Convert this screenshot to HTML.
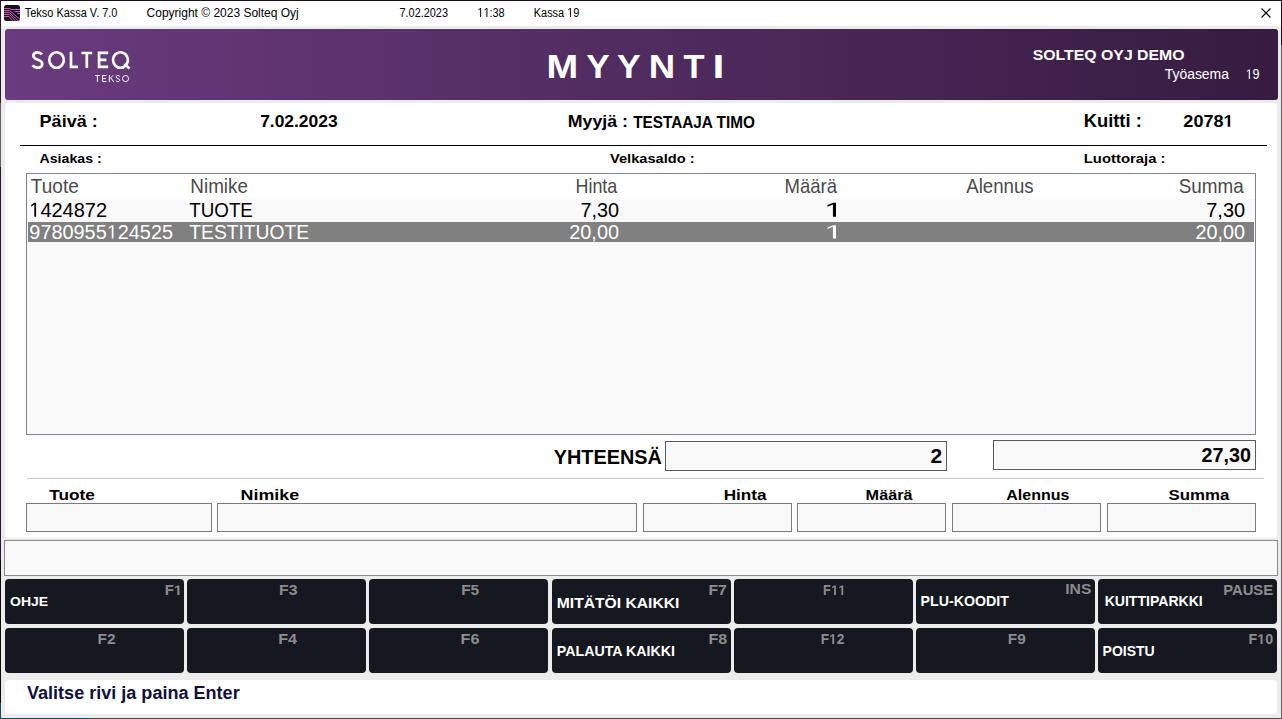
<!DOCTYPE html>
<html><head><meta charset="utf-8"><title>Tekso Kassa</title>
<style>
*{margin:0;padding:0;box-sizing:border-box}
html,body{width:1282px;height:719px;overflow:hidden;background:#ececec;font-family:"Liberation Sans",sans-serif}
.a{position:absolute}
#win{position:absolute;left:0;top:0;width:1282px;height:719px;background:#ececec}
#titlebar{left:1px;top:1px;width:1280px;height:25px;background:#fff}
#banner{left:5px;top:29px;width:1273px;height:71px;border-radius:3px;background:linear-gradient(90deg,#6a3b7e 0%,#361c40 100%)}
#panel{left:5px;top:103px;width:1272px;height:435px;border-radius:4px;background:#fff}
#msg{left:4px;top:540px;width:1274px;height:36px;border:1px solid #8a8a8a;background:#f9f9f9}
#status{left:5px;top:680px;width:1272px;height:34px;border-radius:4px;background:#fff}
.tbl{border:1px solid #7f8290;background:#f9f9f9}
.thd{background:#fff}
.row1{background:#f9f9f9}
.sel{background:#808080}
.tot{border:1px solid #5a5a5a;background:#f9f9f9}
.line{background:#000}
.sep{background:#c6c6c6}
.inp{border:1px solid #7a7a7a;background:#f9f9f9}
.btn{background:#16181f;border-radius:4px}
svg.txt{position:absolute;left:0;top:0;width:1282px;height:719px;font-family:"Liberation Sans",sans-serif}
</style></head><body>
<div id="win"></div>
<div id="titlebar" class="a"></div>
<div id="banner" class="a"></div>
<div id="panel" class="a"></div>
<div id="msg" class="a"></div>
<div id="status" class="a"></div>
<div class="a tbl" style="left:26px;top:173px;width:1230px;height:262px"></div>
<div class="a thd" style="left:28px;top:174px;width:1226px;height:25px"></div>
<div class="a row1" style="left:28px;top:199px;width:1226px;height:23px"></div>
<div class="a sel" style="left:28px;top:222px;width:1226px;height:20px"></div>
<div class="a tot" style="left:665px;top:441px;width:282px;height:30px"></div>
<div class="a tot" style="left:993px;top:440px;width:263px;height:30px"></div>
<div class="a line" style="left:20px;top:145px;width:1247px;height:1px"></div>
<div class="a sep" style="left:27px;top:478px;width:1237px;height:1px"></div>
<div class="a inp" style="left:26px;top:503px;width:186px;height:29px"></div>
<div class="a inp" style="left:217px;top:503px;width:420px;height:29px"></div>
<div class="a inp" style="left:643px;top:503px;width:149px;height:29px"></div>
<div class="a inp" style="left:797px;top:503px;width:149px;height:29px"></div>
<div class="a inp" style="left:952px;top:503px;width:149px;height:29px"></div>
<div class="a inp" style="left:1107px;top:503px;width:149px;height:29px"></div>
<div class="a btn" style="left:5px;top:579px;width:179px;height:45px"></div>
<div class="a btn" style="left:187px;top:579px;width:179px;height:45px"></div>
<div class="a btn" style="left:369px;top:579px;width:179px;height:45px"></div>
<div class="a btn" style="left:552px;top:579px;width:179px;height:45px"></div>
<div class="a btn" style="left:734px;top:579px;width:179px;height:45px"></div>
<div class="a btn" style="left:916px;top:579px;width:179px;height:45px"></div>
<div class="a btn" style="left:1098px;top:579px;width:179px;height:45px"></div>
<div class="a btn" style="left:5px;top:628px;width:179px;height:45px"></div>
<div class="a btn" style="left:187px;top:628px;width:179px;height:45px"></div>
<div class="a btn" style="left:369px;top:628px;width:179px;height:45px"></div>
<div class="a btn" style="left:552px;top:628px;width:179px;height:45px"></div>
<div class="a btn" style="left:734px;top:628px;width:179px;height:45px"></div>
<div class="a btn" style="left:916px;top:628px;width:179px;height:45px"></div>
<div class="a btn" style="left:1098px;top:628px;width:179px;height:45px"></div>
<div class="a bd" style="left:0px;top:0px;width:1282px;height:1px;background:#1c1020"></div>
<div class="a bd" style="left:0px;top:1px;width:1px;height:102px;background:#2a1630"></div>
<div class="a bd" style="left:0px;top:103px;width:1px;height:64px;background:#606060"></div>
<div class="a bd" style="left:0px;top:167px;width:1px;height:393px;background:#2a1630"></div>
<div class="a bd" style="left:0px;top:560px;width:1px;height:143px;background:#0c0c0e"></div>
<div class="a bd" style="left:0px;top:703px;width:1px;height:16px;background:#0f4c60"></div>
<div class="a bd" style="left:1281px;top:1px;width:1px;height:44px;background:#1c1020"></div>
<div class="a bd" style="left:1281px;top:45px;width:1px;height:673px;background:#626262"></div>
<div class="a bd" style="left:1px;top:718px;width:89px;height:1px;background:#0f4c60"></div>
<div class="a bd" style="left:90px;top:718px;width:1192px;height:1px;background:#4a4a4a"></div>
<svg class="txt" width="1282" height="719" viewBox="0 0 1282 719">
<text x="24.76" y="17.00" font-size="13.08" font-weight="normal" fill="#000" textLength="92.67" lengthAdjust="spacingAndGlyphs">Tekso Kassa V. 7.0</text>
<text x="146.59" y="17.00" font-size="13.08" font-weight="normal" fill="#000" textLength="152.12" lengthAdjust="spacingAndGlyphs">Copyright © 2023 Solteq Oyj</text>
<text x="399.54" y="17.00" font-size="13.08" font-weight="normal" fill="#000" textLength="48.43" lengthAdjust="spacingAndGlyphs">7.02.2023</text>
<text x="477.32" y="17.00" font-size="13.08" font-weight="normal" fill="#000" textLength="27.33" lengthAdjust="spacingAndGlyphs">  :38</text><polygon transform="translate(477.32,17.00) scale(0.00550,-0.00639)" points="696,0 515,0 515,1237 197,1010 197,1180 530,1409 696,1409" fill="#000"/><polygon transform="translate(483.58,17.00) scale(0.00550,-0.00639)" points="696,0 515,0 515,1237 197,1010 197,1180 530,1409 696,1409" fill="#000"/>
<text x="533.80" y="17.00" font-size="13.08" font-weight="normal" fill="#000" textLength="45.51" lengthAdjust="spacingAndGlyphs">Kassa  9</text><polygon transform="translate(567.18,17.00) scale(0.00533,-0.00639)" points="696,0 515,0 515,1237 197,1010 197,1180 530,1409 696,1409" fill="#000"/>
<defs><clipPath id="ic"><rect x="4" y="5" width="16" height="16" rx="2.5"/></clipPath>
<linearGradient id="ig" gradientUnits="userSpaceOnUse" x1="4" y1="0" x2="20" y2="0"><stop offset="0" stop-color="#e04aa8"/><stop offset="1" stop-color="#c85ae0"/></linearGradient></defs>
<g clip-path="url(#ic)">
<rect x="4" y="5" width="16" height="16" fill="#121317"/>
<g fill="none" stroke="url(#ig)" stroke-width="1">
<path d="M3,8.5 H9 L11,9.5 H21"/>
<path d="M3,10.5 H9.5 L22,21"/>
<path d="M3,12.5 H9.5 L19.5,22"/>
<path d="M3,14.5 H9.5 L16.5,22"/>
<path d="M3,16.5 H9 L13.5,22"/>
<path d="M14.5,11.5 H21"/>
<path d="M17,13.5 H21"/>
</g></g>
<path d="M1261.5,8.5 L1270.5,17.5 M1270.5,8.5 L1261.5,17.5" stroke="#000" stroke-width="1.1" fill="none"/>
<g fill="none" stroke="#fff" stroke-width="2.7">
<path d="M41.9,54.5 C40.9,53 39.4,52.3 37.6,52.3 C35.1,52.3 33.4,53.7 33.4,55.8 C33.4,61 42.2,58.5 42.2,63.9 C42.2,66.1 40.4,67.6 37.6,67.6 C35.4,67.6 33.6,66.7 32.6,65.2"/>
<ellipse cx="56.55" cy="60" rx="7.3" ry="7.75"/>
<path d="M71.0,51.7 V66.8 H78"/>
<path d="M81.4,53 H92.2 M86.8,53 V68"/>
<path d="M108.2,52.95 H99.05 V66.95 H108.2 M99.05,59.8 H106.4"/>
<ellipse cx="120.45" cy="60" rx="7.45" ry="7.75"/>
<path d="M124.6,63.8 L129.5,68.6"/>
</g>
<g fill="none" stroke="#fff" stroke-width="0.95">
<path d="M95,75.55 H99.8 M97.4,75.55 V82.1"/>
<path d="M106.5,75.55 H102.55 V81.55 H106.5 M102.55,78.6 H106"/>
<path d="M109.35,75 V82.1 M113.3,75.2 L109.4,79.1 M110.9,77.8 L113.8,82.1"/>
<path d="M119.8,76.4 C119.3,75.8 118.6,75.55 117.9,75.55 C116.8,75.55 116.2,76.2 116.2,77 C116.2,79.1 119.65,78.1 119.65,80.2 C119.65,81.1 118.9,81.6 117.9,81.6 C117.1,81.6 116.3,81.3 115.8,80.7"/>
<ellipse cx="125.55" cy="78.55" rx="3.05" ry="3.05"/>
</g>
<text x="546.45" y="78.00" font-size="33.43" font-weight="bold" fill="#fff" textLength="31.70" lengthAdjust="spacingAndGlyphs">M</text>
<text x="586.20" y="78.00" font-size="33.43" font-weight="bold" fill="#fff" textLength="23.46" lengthAdjust="spacingAndGlyphs">Y</text>
<text x="617.10" y="78.00" font-size="33.43" font-weight="bold" fill="#fff" textLength="23.67" lengthAdjust="spacingAndGlyphs">Y</text>
<text x="648.65" y="78.00" font-size="33.43" font-weight="bold" fill="#fff" textLength="26.41" lengthAdjust="spacingAndGlyphs">N</text>
<text x="683.42" y="78.00" font-size="33.43" font-weight="bold" fill="#fff" textLength="21.05" lengthAdjust="spacingAndGlyphs">T</text>
<text x="712.62" y="78.00" font-size="33.43" font-weight="bold" fill="#fff" textLength="11.96" lengthAdjust="spacingAndGlyphs">I</text>
<text x="1032.74" y="60.30" font-size="15.41" font-weight="bold" fill="#fff" textLength="151.82" lengthAdjust="spacingAndGlyphs">SOLTEQ OYJ DEMO</text>
<text x="1164.69" y="79.00" font-size="13.95" font-weight="normal" fill="#fff" textLength="64.31" lengthAdjust="spacingAndGlyphs">Työasema</text>
<text x="1245.59" y="79.00" font-size="13.95" font-weight="normal" fill="#fff" textLength="14.00" lengthAdjust="spacingAndGlyphs"> 9</text><polygon transform="translate(1245.59,79.00) scale(0.00615,-0.00681)" points="696,0 515,0 515,1237 197,1010 197,1180 530,1409 696,1409" fill="#fff"/>
<text x="39.59" y="126.70" font-size="16.72" font-weight="bold" fill="#000" textLength="58.14" lengthAdjust="spacingAndGlyphs">Päivä :</text>
<text x="260.15" y="126.70" font-size="17.01" font-weight="bold" fill="#000" textLength="77.47" lengthAdjust="spacingAndGlyphs">7.02.2023</text>
<text x="567.81" y="126.50" font-size="16.72" font-weight="bold" fill="#000" textLength="60.20" lengthAdjust="spacingAndGlyphs">Myyjä :</text>
<text x="633.13" y="128.00" font-size="17.30" font-weight="bold" fill="#000" textLength="121.70" lengthAdjust="spacingAndGlyphs">TESTAAJA TIMO</text>
<text x="1083.77" y="126.60" font-size="17.44" font-weight="bold" fill="#000" textLength="57.98" lengthAdjust="spacingAndGlyphs">Kuitti :</text>
<text x="1183.37" y="126.80" font-size="16.72" font-weight="bold" fill="#000" textLength="50.16" lengthAdjust="spacingAndGlyphs">2078 </text><polygon transform="translate(1223.50,126.80) scale(0.00881,-0.00816)" points="759,0 478,0 478,1170 140,959 140,1180 493,1409 759,1409" fill="#000"/>
<text x="39.55" y="162.80" font-size="12.94" font-weight="bold" fill="#000" textLength="62.11" lengthAdjust="spacingAndGlyphs">Asiakas :</text>
<text x="610.00" y="162.80" font-size="12.94" font-weight="bold" fill="#000" textLength="84.60" lengthAdjust="spacingAndGlyphs">Velkasaldo :</text>
<text x="1083.80" y="162.90" font-size="12.79" font-weight="bold" fill="#000" textLength="81.72" lengthAdjust="spacingAndGlyphs">Luottoraja :</text>
<text x="30.78" y="193.00" font-size="20.49" font-weight="normal" fill="#4a4a4a" textLength="48.06" lengthAdjust="spacingAndGlyphs">Tuote</text>
<text x="190.36" y="193.00" font-size="20.49" font-weight="normal" fill="#4a4a4a" textLength="57.57" lengthAdjust="spacingAndGlyphs">Nimike</text>
<text x="575.53" y="193.00" font-size="20.49" font-weight="normal" fill="#4a4a4a" textLength="41.78" lengthAdjust="spacingAndGlyphs">Hinta</text>
<text x="784.58" y="193.00" font-size="20.49" font-weight="normal" fill="#4a4a4a" textLength="52.43" lengthAdjust="spacingAndGlyphs">Määrä</text>
<text x="966.26" y="193.00" font-size="20.49" font-weight="normal" fill="#4a4a4a" textLength="67.40" lengthAdjust="spacingAndGlyphs">Alennus</text>
<text x="1178.73" y="193.00" font-size="20.49" font-weight="normal" fill="#4a4a4a" textLength="64.97" lengthAdjust="spacingAndGlyphs">Summa</text>
<text x="29.28" y="216.80" font-size="20.35" font-weight="normal" fill="#000" textLength="77.82" lengthAdjust="spacingAndGlyphs"> 424872</text><polygon transform="translate(29.28,216.80) scale(0.00976,-0.00994)" points="696,0 515,0 515,1237 197,1010 197,1180 530,1409 696,1409" fill="#000"/>
<text x="189.29" y="216.80" font-size="20.35" font-weight="normal" fill="#000" textLength="63.61" lengthAdjust="spacingAndGlyphs">TUOTE</text>
<text x="580.49" y="216.80" font-size="20.35" font-weight="normal" fill="#000" textLength="38.59" lengthAdjust="spacingAndGlyphs">7,30</text>
<text x="824.16" y="216.80" font-size="20.35" font-weight="normal" fill="#000" textLength="19.37" lengthAdjust="spacingAndGlyphs"> </text><polygon transform="translate(824.16,216.80) scale(0.01701,-0.00994)" points="696,0 515,0 515,1237 197,1010 197,1180 530,1409 696,1409" fill="#000"/>
<text x="1206.28" y="216.80" font-size="20.35" font-weight="normal" fill="#000" textLength="38.80" lengthAdjust="spacingAndGlyphs">7,30</text>
<text x="29.37" y="238.60" font-size="19.48" font-weight="normal" fill="#fff" textLength="143.67" lengthAdjust="spacingAndGlyphs">9780955 24525</text><polygon transform="translate(106.73,238.60) scale(0.00970,-0.00951)" points="696,0 515,0 515,1237 197,1010 197,1180 530,1409 696,1409" fill="#fff"/>
<text x="189.28" y="238.60" font-size="19.48" font-weight="normal" fill="#fff" textLength="119.86" lengthAdjust="spacingAndGlyphs">TESTITUOTE</text>
<text x="569.20" y="238.60" font-size="19.48" font-weight="normal" fill="#fff" textLength="49.88" lengthAdjust="spacingAndGlyphs">20,00</text>
<text x="824.16" y="238.60" font-size="19.48" font-weight="normal" fill="#fff" textLength="19.37" lengthAdjust="spacingAndGlyphs"> </text><polygon transform="translate(824.16,238.60) scale(0.01701,-0.00951)" points="696,0 515,0 515,1237 197,1010 197,1180 530,1409 696,1409" fill="#fff"/>
<text x="1195.51" y="238.60" font-size="19.48" font-weight="normal" fill="#fff" textLength="49.57" lengthAdjust="spacingAndGlyphs">20,00</text>
<text x="553.66" y="464.30" font-size="20.78" font-weight="bold" fill="#000" textLength="108.16" lengthAdjust="spacingAndGlyphs">YHTEENSÄ</text>
<text x="930.47" y="462.90" font-size="20.20" font-weight="bold" fill="#000" textLength="11.68" lengthAdjust="spacingAndGlyphs">2</text>
<text x="1201.61" y="462.00" font-size="20.20" font-weight="bold" fill="#000" textLength="49.41" lengthAdjust="spacingAndGlyphs">27,30</text>
<text x="49.31" y="500.00" font-size="14.83" font-weight="bold" fill="#000" textLength="45.58" lengthAdjust="spacingAndGlyphs">Tuote</text>
<text x="240.50" y="500.00" font-size="14.83" font-weight="bold" fill="#000" textLength="58.71" lengthAdjust="spacingAndGlyphs">Nimike</text>
<text x="723.65" y="500.00" font-size="14.83" font-weight="bold" fill="#000" textLength="42.93" lengthAdjust="spacingAndGlyphs">Hinta</text>
<text x="865.61" y="500.00" font-size="14.83" font-weight="bold" fill="#000" textLength="46.95" lengthAdjust="spacingAndGlyphs">Määrä</text>
<text x="1006.30" y="500.00" font-size="14.83" font-weight="bold" fill="#000" textLength="63.15" lengthAdjust="spacingAndGlyphs">Alennus</text>
<text x="1168.41" y="500.00" font-size="14.83" font-weight="bold" fill="#000" textLength="60.88" lengthAdjust="spacingAndGlyphs">Summa</text>
<text x="10.03" y="606.20" font-size="13.66" font-weight="bold" fill="#fff" textLength="38.12" lengthAdjust="spacingAndGlyphs">OHJE</text>
<text x="556.75" y="608.20" font-size="14.68" font-weight="bold" fill="#fff" textLength="122.69" lengthAdjust="spacingAndGlyphs">MITÄTÖI KAIKKI</text>
<text x="920.55" y="606.30" font-size="14.24" font-weight="bold" fill="#fff" textLength="88.40" lengthAdjust="spacingAndGlyphs">PLU-KOODIT</text>
<text x="1104.66" y="606.30" font-size="14.24" font-weight="bold" fill="#fff" textLength="98.08" lengthAdjust="spacingAndGlyphs">KUITTIPARKKI</text>
<text x="556.85" y="655.60" font-size="13.81" font-weight="bold" fill="#fff" textLength="118.10" lengthAdjust="spacingAndGlyphs">PALAUTA KAIKKI</text>
<text x="1102.56" y="655.50" font-size="14.39" font-weight="bold" fill="#fff" textLength="52.19" lengthAdjust="spacingAndGlyphs">POISTU</text>
<text x="164.70" y="595.00" font-size="13.81" font-weight="bold" fill="#8c8c8c" textLength="17.47" lengthAdjust="spacingAndGlyphs">F </text><polygon transform="translate(173.84,595.00) scale(0.00731,-0.00674)" points="759,0 478,0 478,1170 140,959 140,1180 493,1409 759,1409" fill="#8c8c8c"/>
<text x="279.14" y="595.00" font-size="13.81" font-weight="bold" fill="#8c8c8c" textLength="18.43" lengthAdjust="spacingAndGlyphs">F3</text>
<text x="461.16" y="595.00" font-size="13.81" font-weight="bold" fill="#8c8c8c" textLength="18.07" lengthAdjust="spacingAndGlyphs">F5</text>
<text x="708.45" y="595.00" font-size="13.81" font-weight="bold" fill="#8c8c8c" textLength="18.34" lengthAdjust="spacingAndGlyphs">F7</text>
<text x="823.02" y="595.00" font-size="13.81" font-weight="bold" fill="#8c8c8c" textLength="21.88" lengthAdjust="spacingAndGlyphs">F  </text><polygon transform="translate(831.04,595.00) scale(0.00641,-0.00674)" points="759,0 478,0 478,1170 140,959 140,1180 493,1409 759,1409" fill="#8c8c8c"/><polygon transform="translate(838.33,595.00) scale(0.00641,-0.00674)" points="759,0 478,0 478,1170 140,959 140,1180 493,1409 759,1409" fill="#8c8c8c"/>
<text x="1065.25" y="594.40" font-size="14.24" font-weight="bold" fill="#8c8c8c" textLength="26.06" lengthAdjust="spacingAndGlyphs">INS</text>
<text x="1223.21" y="594.50" font-size="14.10" font-weight="bold" fill="#8c8c8c" textLength="49.87" lengthAdjust="spacingAndGlyphs">PAUSE</text>
<text x="97.56" y="644.00" font-size="14.10" font-weight="bold" fill="#8c8c8c" textLength="18.06" lengthAdjust="spacingAndGlyphs">F2</text>
<text x="278.22" y="644.00" font-size="14.10" font-weight="bold" fill="#8c8c8c" textLength="18.86" lengthAdjust="spacingAndGlyphs">F4</text>
<text x="460.52" y="644.00" font-size="14.10" font-weight="bold" fill="#8c8c8c" textLength="18.87" lengthAdjust="spacingAndGlyphs">F6</text>
<text x="708.42" y="644.00" font-size="14.10" font-weight="bold" fill="#8c8c8c" textLength="18.78" lengthAdjust="spacingAndGlyphs">F8</text>
<text x="820.68" y="644.00" font-size="14.10" font-weight="bold" fill="#8c8c8c" textLength="23.67" lengthAdjust="spacingAndGlyphs">F 2</text><polygon transform="translate(829.07,644.00) scale(0.00671,-0.00688)" points="759,0 478,0 478,1170 140,959 140,1180 493,1409 759,1409" fill="#8c8c8c"/>
<text x="1007.77" y="644.00" font-size="14.10" font-weight="bold" fill="#8c8c8c" textLength="17.89" lengthAdjust="spacingAndGlyphs">F9</text>
<text x="1248.55" y="644.00" font-size="14.10" font-weight="bold" fill="#8c8c8c" textLength="24.54" lengthAdjust="spacingAndGlyphs">F 0</text><polygon transform="translate(1257.25,644.00) scale(0.00695,-0.00688)" points="759,0 478,0 478,1170 140,959 140,1180 493,1409 759,1409" fill="#8c8c8c"/>
<text x="26.97" y="699.30" font-size="18.46" font-weight="bold" fill="#10103c" textLength="212.70" lengthAdjust="spacingAndGlyphs">Valitse rivi ja paina Enter</text>
</svg>
</body></html>
